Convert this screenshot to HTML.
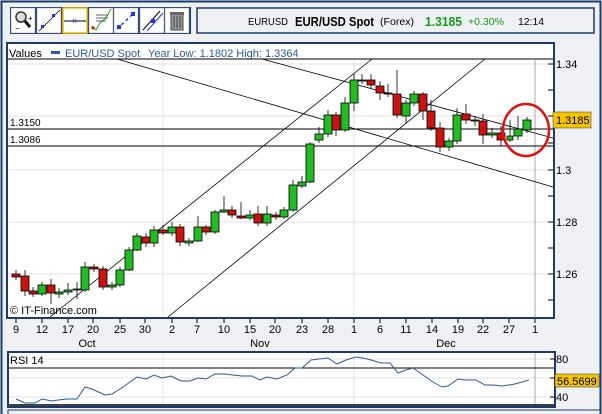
<!DOCTYPE html>
<html><head><meta charset="utf-8"><style>
html,body{margin:0;padding:0;background:#eef0f3;}
svg{display:block;font-family:"Liberation Sans",sans-serif;}
</style></head><body>
<svg width="602" height="414" viewBox="0 0 602 414" xmlns="http://www.w3.org/2000/svg">
<rect x="0" y="0" width="602" height="414" fill="#eef0f3"/>
<rect x="1.5" y="1.5" width="599" height="420" fill="none" stroke="#1c3b6b" stroke-width="2"/>
<!-- toolbar -->
<rect x="10" y="7" width="181" height="27" fill="#1c3b6b"/>
<g fill="#ffffff" stroke="#8a8a8a" stroke-width="0.5">
<rect x="11" y="8" width="24" height="25"/><rect x="37" y="8" width="24" height="25"/>
<rect x="63" y="8" width="24" height="25" stroke="#f2c300" stroke-width="1.5"/>
<rect x="89" y="8" width="24" height="25"/><rect x="114" y="8" width="24" height="25"/>
<rect x="140" y="8" width="24" height="25"/><rect x="165" y="8" width="24" height="25"/>
</g>
<circle cx="21" cy="17" r="5" fill="#ddd" stroke="#333" stroke-width="1.5"/><line x1="25" y1="21" x2="30" y2="27" stroke="#111" stroke-width="3"/>
<text x="28" y="21" font-size="8">+</text><text x="15" y="31" font-size="8">−</text>
<line x1="39" y1="31" x2="60" y2="10" stroke="#000" stroke-width="0.8"/><rect x="41" y="25" width="3" height="3" fill="#2233dd"/><rect x="52" y="14" width="3" height="3" fill="#2233dd"/>
<line x1="64" y1="21" x2="86" y2="21" stroke="#000"/><text x="72" y="24" font-size="9" fill="#2233dd">×</text>
<path d="M92 26 L96 30 L100 23 L106 18 L111 9" fill="none" stroke="#2a2" stroke-width="1"/><path d="M96 15h12M96 18h12M96 21h10" stroke="#333" stroke-width="0.8"/><circle cx="93" cy="28" r="1.5" fill="#d00"/>
<line x1="117" y1="29" x2="135" y2="12" stroke="#2233dd" stroke-dasharray="3,3" stroke-width="1.5"/><rect x="117" y="25" width="4" height="4" fill="#2233dd"/><rect x="131" y="12" width="4" height="4" fill="#2233dd"/>
<line x1="143" y1="30" x2="160" y2="11" stroke="#000"/><line x1="147" y1="31" x2="163" y2="13" stroke="#2233dd"/><rect x="151" y="19" width="4" height="4" fill="#2233dd"/>
<rect x="171" y="14" width="12" height="16" fill="#999" stroke="#444"/><rect x="170" y="12" width="14" height="3" fill="#666"/><path d="M174 16v12M177 16v12M180 16v12" stroke="#444"/>
<!-- info box -->
<rect x="197" y="8" width="397" height="25" fill="#eef0f3" stroke="#1c3b6b" stroke-width="1.5"/>
<text x="248" y="25" font-size="10" textLength="40" lengthAdjust="spacingAndGlyphs">EURUSD</text>
<text x="295" y="26" font-size="13" font-weight="bold" textLength="79" lengthAdjust="spacingAndGlyphs">EUR/USD Spot</text>
<text x="380" y="25" font-size="10" textLength="34" lengthAdjust="spacingAndGlyphs">(Forex)</text>
<text x="425" y="26" font-size="13" font-weight="bold" fill="#169a16" textLength="37" lengthAdjust="spacingAndGlyphs">1.3185</text>
<text x="468" y="25" font-size="10" fill="#169a16" textLength="36" lengthAdjust="spacingAndGlyphs">+0.30%</text>
<text x="518" y="25" font-size="10" textLength="26" lengthAdjust="spacingAndGlyphs">12:14</text>
<!-- main chart panel -->
<rect x="7" y="43" width="547" height="275" fill="#ffffff" stroke="#1c3b6b" stroke-width="2"/>
<text x="9" y="57" font-size="11">Values</text>
<rect x="51" y="51" width="9" height="3" fill="#2a5a9a"/>
<text x="65" y="57" font-size="11" fill="#2a5a9a">EUR/USD Spot</text>
<text x="148" y="57" font-size="11" fill="#2a5a9a">Year Low: 1.1802 High: 1.3364</text>
<line x1="8" y1="59" x2="553" y2="59" stroke="#000"/>
<g stroke="#e2e2e2"><line x1="8" y1="64" x2="553" y2="64"/><line x1="8" y1="116" x2="553" y2="116"/><line x1="8" y1="170" x2="553" y2="170"/><line x1="8" y1="222" x2="553" y2="222"/><line x1="8" y1="274" x2="553" y2="274"/>
<line x1="163" y1="60" x2="163" y2="317"/><line x1="354" y1="60" x2="354" y2="317"/></g>
<line x1="535" y1="60" x2="535" y2="317" stroke="#aaa"/>
<g stroke="#000"><line x1="548" y1="64" x2="553" y2="64"/><line x1="548" y1="90" x2="553" y2="90"/><line x1="548" y1="116" x2="553" y2="116"/><line x1="548" y1="143" x2="553" y2="143"/><line x1="548" y1="170" x2="553" y2="170"/><line x1="548" y1="196" x2="553" y2="196"/><line x1="548" y1="222" x2="553" y2="222"/><line x1="548" y1="248" x2="553" y2="248"/><line x1="548" y1="274" x2="553" y2="274"/><line x1="548" y1="300" x2="553" y2="300"/></g>
<line x1="8" y1="129" x2="553" y2="129" stroke="#000"/>
<line x1="8" y1="146" x2="553" y2="146" stroke="#000"/>
<text x="10" y="126" font-size="10">1.3150</text>
<text x="10" y="143" font-size="10">1.3086</text>
<g stroke="#000" stroke-width="0.8" fill="none">
<line x1="117" y1="59" x2="553" y2="187"/>
<line x1="262" y1="59" x2="553" y2="138"/>
<line x1="50" y1="317" x2="372" y2="59"/>
<line x1="168" y1="317" x2="485" y2="59"/>
</g>
<g stroke="#000" stroke-width="0.8">
<path d="M16 270v10M25 270v26M33 287v10M42 282v14M51 279v25M59 288v10M68 283v12M77 282v17M85 262v30M94 264v8M103 266v24M112 282v8M120 267v20M129 247v24M137 233v18M146 233v14M154 226v21M163 225v10M172 222v14M180 224v22M189 238v8M198 216v26M206 225v10M215 210v24M224 196v17M232 206v12M241 202v17M250 210v10M258 206v20M267 206v20M276 212v8M284 207v12M293 180v32M302 176v12M310 142v41M319 127v16M328 110v27M336 112v24M345 97v35M354 74v37M362 74v10M371 74v14M380 81v19M388 84v13M397 70v48M406 100v23M414 91v15M423 92v28M431 100v31M440 122v30M449 138v13M457 108v36M466 104v20M475 116v10M483 114v30M492 128v10M501 126v20M510 120v22M518 116v24M527 117v16"/>
</g>
<g stroke="#000" stroke-width="0.8">
<rect x="12" y="274" width="8" height="3" fill="#cc1111"/><rect x="21" y="276" width="8" height="15" fill="#cc1111"/><rect x="29" y="291" width="8" height="3" fill="#cc1111"/><rect x="38" y="285" width="8" height="9" fill="#22bb22"/><rect x="47" y="285" width="8" height="8" fill="#cc1111"/><rect x="55" y="292" width="8" height="2" fill="#22bb22"/><rect x="64" y="290" width="8" height="2" fill="#22bb22"/><rect x="73" y="289" width="8" height="1" fill="#22bb22"/><rect x="81" y="267" width="8" height="23" fill="#22bb22"/><rect x="90" y="267" width="8" height="2" fill="#cc1111"/><rect x="99" y="269" width="8" height="18" fill="#cc1111"/><rect x="108" y="285" width="8" height="2" fill="#22bb22"/><rect x="116" y="270" width="8" height="15" fill="#22bb22"/><rect x="125" y="250" width="8" height="20" fill="#22bb22"/><rect x="133" y="236" width="8" height="14" fill="#22bb22"/><rect x="142" y="237" width="8" height="6" fill="#cc1111"/><rect x="150" y="230" width="8" height="13" fill="#22bb22"/><rect x="159" y="230" width="8" height="3" fill="#cc1111"/><rect x="168" y="227" width="8" height="6" fill="#22bb22"/><rect x="176" y="227" width="8" height="15" fill="#cc1111"/><rect x="185" y="241" width="8" height="2" fill="#22bb22"/><rect x="194" y="227" width="8" height="14" fill="#22bb22"/><rect x="202" y="227" width="8" height="5" fill="#cc1111"/><rect x="211" y="212" width="8" height="20" fill="#22bb22"/><rect x="220" y="210" width="8" height="2" fill="#22bb22"/><rect x="228" y="210" width="8" height="5" fill="#cc1111"/><rect x="237" y="216" width="8" height="2" fill="#cc1111"/><rect x="246" y="215" width="8" height="3" fill="#22bb22"/><rect x="254" y="214" width="8" height="9" fill="#cc1111"/><rect x="263" y="214" width="8" height="9" fill="#22bb22"/><rect x="272" y="215" width="8" height="2" fill="#cc1111"/><rect x="280" y="210" width="8" height="7" fill="#22bb22"/><rect x="289" y="185" width="8" height="25" fill="#22bb22"/><rect x="298" y="182" width="8" height="4" fill="#22bb22"/><rect x="306" y="144" width="8" height="38" fill="#22bb22"/><rect x="315" y="134" width="8" height="6" fill="#22bb22"/><rect x="324" y="115" width="8" height="19" fill="#22bb22"/><rect x="332" y="115" width="8" height="15" fill="#cc1111"/><rect x="341" y="103" width="8" height="27" fill="#22bb22"/><rect x="350" y="80" width="8" height="23" fill="#22bb22"/><rect x="358" y="80" width="8" height="1" fill="#22bb22"/><rect x="367" y="80" width="8" height="5" fill="#cc1111"/><rect x="376" y="86" width="8" height="7" fill="#cc1111"/><rect x="384" y="93" width="8" height="1" fill="#cc1111"/><rect x="393" y="94" width="8" height="21" fill="#cc1111"/><rect x="402" y="103" width="8" height="13" fill="#22bb22"/><rect x="410" y="94" width="8" height="9" fill="#22bb22"/><rect x="419" y="94" width="8" height="17" fill="#cc1111"/><rect x="427" y="111" width="8" height="17" fill="#cc1111"/><rect x="436" y="128" width="8" height="19" fill="#cc1111"/><rect x="445" y="141" width="8" height="6" fill="#22bb22"/><rect x="453" y="115" width="8" height="26" fill="#22bb22"/><rect x="462" y="114" width="8" height="6" fill="#cc1111"/><rect x="471" y="120" width="8" height="1" fill="#cc1111"/><rect x="479" y="121" width="8" height="14" fill="#cc1111"/><rect x="488" y="133" width="8" height="2" fill="#22bb22"/><rect x="497" y="133" width="8" height="7" fill="#cc1111"/><rect x="507" y="136" width="6" height="4" fill="#22bb22"/><rect x="514" y="129" width="8" height="7" fill="#22bb22"/><rect x="523" y="120" width="8" height="10" fill="#22bb22"/>
</g>
<ellipse cx="526" cy="130" rx="23" ry="26" fill="none" stroke="#e01010" stroke-width="2.5"/>
<text x="10" y="314" font-size="11">© IT-Finance.com</text>
<g font-size="11"><text x="556" y="68">1.34</text><text x="556" y="174">1.3</text><text x="556" y="226">1.28</text><text x="556" y="278">1.26</text></g>
<rect x="553" y="112" width="38" height="16" fill="#f5c400" stroke="#333" stroke-width="0.5"/>
<text x="556" y="124" font-size="11">1.3185</text>
<g font-size="11" text-anchor="middle">
<text x="16" y="333">9</text><text x="42" y="333">12</text><text x="68" y="333">17</text><text x="93" y="333">20</text><text x="120" y="333">25</text><text x="145" y="333">30</text><text x="172" y="333">2</text><text x="197" y="333">7</text><text x="224" y="333">10</text><text x="250" y="333">15</text><text x="275" y="333">20</text><text x="302" y="333">23</text><text x="328" y="333">28</text><text x="354" y="333">1</text><text x="380" y="333">6</text><text x="406" y="333">11</text><text x="432" y="333">14</text><text x="458" y="333">19</text><text x="483" y="333">22</text><text x="509" y="333">27</text><text x="535" y="333">1</text>
<text x="87" y="347">Oct</text><text x="260" y="347">Nov</text><text x="446" y="347">Dec</text>
</g>
<g stroke="#000"><path d="M16 319v4M42 319v4M68 319v4M93 319v4M120 319v4M145 319v4M172 319v4M197 319v4M224 319v4M250 319v4M275 319v4M302 319v4M328 319v4M354 319v4M380 319v4M406 319v4M432 319v4M458 319v4M483 319v4M509 319v4M535 319v4"/></g>
<rect x="8" y="352" width="547" height="55" fill="#ffffff" stroke="#1c3b6b" stroke-width="2"/>
<g stroke="#e2e2e2"><line x1="9" y1="359" x2="554" y2="359"/><line x1="9" y1="378" x2="554" y2="378"/><line x1="9" y1="397" x2="554" y2="397"/><line x1="163" y1="353" x2="163" y2="406"/><line x1="354" y1="353" x2="354" y2="406"/></g>
<line x1="535" y1="353" x2="535" y2="406" stroke="#aaa"/>
<line x1="9" y1="368" x2="554" y2="368" stroke="#000"/>
<line x1="9" y1="405" x2="554" y2="405" stroke="#000" stroke-width="1.5"/>
<text x="10" y="364" font-size="11">RSI 14</text>
<polyline fill="none" stroke="#2a5a9a" stroke-width="1" points="16,399 25,403 35,403 42,399 52,401 58,400 67,399 77,399 85,387 92,389 105,395 112,394 123,387 137,377 146,379 154,375 162,378 171,376 181,381 190,381 198,378 206,379 215,374 225,374 233,375 242,376 252,376 260,380 267,377 277,379 287,375 295,368 302,368 311,360 319,359 328,358 337,364 346,360 356,357 363,358 371,360 381,363 390,363 398,373 406,370 413,368 423,375 433,382 442,387 448,386 458,379 465,380 476,380 485,385 493,385 502,386 515,384 529,380"/>
<g stroke="#000"><line x1="550" y1="359" x2="555" y2="359"/><line x1="550" y1="378" x2="555" y2="378"/><line x1="550" y1="397" x2="555" y2="397"/></g>
<text x="556" y="363" font-size="11">80</text><text x="556" y="401" font-size="11">40</text>
<rect x="555" y="374" width="44" height="13" fill="#f5c400" stroke="#333" stroke-width="0.5"/>
<text x="557" y="385" font-size="11">56.5699</text>
<rect x="8" y="410" width="592" height="6" fill="#eef0f3" stroke="#1c3b6b"/>
</svg>
</body></html>
